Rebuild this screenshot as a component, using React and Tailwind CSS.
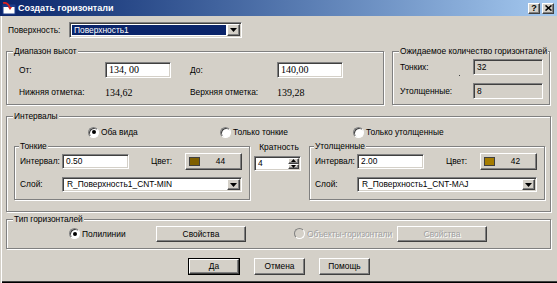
import React from "react";

const sunken =
  "border border-t-[#808080] border-l-[#808080] border-b-white border-r-white shadow-[inset_1px_1px_0_#404040,inset_-1px_-1px_0_#d4d0c8]";
const raised =
  "border border-t-white border-l-white border-b-[#404040] border-r-[#404040] shadow-[inset_-1px_-1px_0_#808080]";
const groupBox =
  "relative border border-[#808080] shadow-[inset_1px_1px_0_#fff,1px_1px_0_#fff]";

function Group({ title, className, children, legendLeft = "left-[6px]" }) {
  return (
    <div className={`${groupBox} ${className}`}>
      <span
        className={`absolute top-[-7px] ${legendLeft} px-[1px] bg-[#d4d0c8] leading-[12px] whitespace-nowrap`}
      >
        {title}
      </span>
      {children}
    </div>
  );
}

function Arrow() {
  return (
    <svg width="7" height="4" viewBox="0 0 7 4">
      <polygon points="0,0 7,0 3.5,4" fill="#000" />
    </svg>
  );
}

function Select({ value, className, selected }) {
  return (
    <div className={`${sunken} bg-white flex items-stretch p-[1px] ${className}`}>
      <div
        className={`flex-1 flex items-center pl-[2px] leading-none m-[1px] whitespace-nowrap ${
          selected ? "bg-[#0a246a] text-white" : ""
        }`}
      >
        {value}
      </div>
      <div className={`${raised} bg-[#d4d0c8] w-[13px] flex items-center justify-center`}>
        <Arrow />
      </div>
    </div>
  );
}

function Input({ value, className, serif, readOnly }) {
  return (
    <div
      className={`${sunken} ${readOnly ? "bg-[#d4d0c8]" : "bg-white"} flex items-center pl-[3px] leading-none ${
        serif ? "font-['Liberation_Serif',serif] text-[10px]" : ""
      } ${className}`}
    >
      {value}
    </div>
  );
}

function Radio({ checked }) {
  return (
    <span className="w-[11px] h-[11px] rounded-full bg-white border border-t-[#808080] border-l-[#808080] border-b-white border-r-white shadow-[inset_1px_1px_0_#404040] flex items-center justify-center shrink-0">
      {checked && <span className="w-[4px] h-[4px] rounded-full bg-black" />}
    </span>
  );
}

function Button({ children, className, disabled, isDefault }) {
  const btn = (
    <div
      className={`${raised} bg-[#d4d0c8] flex items-center justify-center leading-none whitespace-nowrap ${
        disabled ? "text-[#a0a0a0]" : ""
      } ${isDefault ? "w-full h-full" : className}`}
    >
      {children}
    </div>
  );
  if (isDefault) {
    return <div className={`border border-black ${className}`}>{btn}</div>;
  }
  return btn;
}

function ColorButton({ color, value }) {
  return (
    <div className={`${raised} bg-[#d4d0c8] w-[57px] h-[17px] flex items-center pl-[3px]`}>
      <span className="w-[11px] h-[9px] border border-[#404040]" style={{ backgroundColor: color }} />
      <span className="flex-1 text-center leading-none">{value}</span>
    </div>
  );
}

function SubGroup({ title, interval, color, colorValue, layer }) {
  return (
    <Group title={title} legendLeft="left-[4px]" className="w-[236px] h-[54px] pl-[5px] pt-[6px] shrink-0">
      <div className="flex items-center h-[17px]">
        <span className="w-[42px]">Интервал:</span>
        <Input value={interval} className="w-[67px] h-[15px]" />
        <span className="ml-[22px] w-[34px]">Цвет:</span>
        <ColorButton color={color} value={colorValue} />
      </div>
      <div className="flex items-center mt-[7px] h-[15px]">
        <span className="w-[42px]">Слой:</span>
        <Select value={layer} className="w-[180px] h-[15px]" />
      </div>
    </Group>
  );
}

export default function App() {
  return (
    <div className="w-[557px] h-[283px] bg-[#d4d0c8] flex flex-col overflow-hidden text-[8.4px] text-black font-['Liberation_Sans',Arial,sans-serif]">
      {/* Title bar */}
      <div className="h-[16px] shrink-0 flex items-center bg-gradient-to-r from-[#0a246a] to-[#a6caf0] pl-[2px] pr-[3px]">
        <svg width="14" height="13" viewBox="0 0 14 13" className="shrink-0">
          <rect x="1" y="3" width="12" height="9" fill="#fff" stroke="#1c3c8c" />
          <rect x="1" y="3" width="12" height="2" fill="#1c3c8c" />
          <path d="M1 1 Q6 0 8 6" stroke="#e02020" strokeWidth="1.6" fill="none" />
          <polygon points="6,5 10,5 8,8" fill="#e02020" />
        </svg>
        <span className="ml-[2px] text-white font-bold text-[9px] leading-none">Создать горизонтали</span>
        <div className="ml-auto flex gap-[2px]">
          <div className={`${raised} bg-[#d4d0c8] w-[12px] h-[11px] flex items-center justify-center font-bold text-[9px] leading-none`}>
            ?
          </div>
          <div className={`${raised} bg-[#d4d0c8] w-[12px] h-[11px] flex items-center justify-center`}>
            <svg width="7" height="6" viewBox="0 0 7 6">
              <path d="M0.5 0.5 L6.5 5.5 M6.5 0.5 L0.5 5.5" stroke="#000" strokeWidth="1.6" />
            </svg>
          </div>
        </div>
      </div>

      {/* Body */}
      <div className="flex-1 pl-[6px] shadow-[inset_1px_0_0_#d4d0c8,inset_2px_0_0_#fff,inset_0_-1px_0_#000,inset_0_-2px_0_#404040]">
        {/* Surface row */}
        <div className="mt-[6px] h-[16px] flex items-center">
          <span className="w-[63px] pl-[2px]">Поверхность:</span>
          <Select value="Поверхность1" selected className="w-[173px] h-[16px]" />
        </div>

        {/* Top groups */}
        <div className="mt-[13px] flex gap-[8px]">
          <Group title="Диапазон высот" className="w-[378px] h-[54px] pl-[12px] pt-[10px]">
            <div className="flex items-center h-[16px]">
              <span className="w-[86px]">От:</span>
              <div className="w-[85px]">
                <Input value="134, 00" serif className="w-[66px] h-[16px]" />
              </div>
              <span className="w-[87px]">До:</span>
              <Input value="140,00" serif className="w-[66px] h-[16px]" />
            </div>
            <div className="flex items-center h-[12px] mt-[8px]">
              <span className="w-[86px]">Нижняя отметка:</span>
              <span className="w-[85px] font-['Liberation_Serif',serif] text-[10px]">134,62</span>
              <span className="w-[87px]">Верхняя отметка:</span>
              <span className="font-['Liberation_Serif',serif] text-[10px]">139,28</span>
            </div>
          </Group>
          <Group title="Ожидаемое количество горизонталей" className="w-[158px] h-[54px] pl-[7px] pt-[7px]">
            <div className="flex items-center h-[16px]">
              <span className="w-[73px]">Тонких:</span>
              <Input value="32" readOnly className="w-[70px] h-[16px]" />
            </div>
            <div className="flex items-center h-[16px] mt-[8px]">
              <span className="w-[73px]">Утолщенные:</span>
              <Input value="8" readOnly className="w-[70px] h-[16px]" />
            </div>
            <span className="absolute left-[66px] top-[23px] w-[1px] h-[1px] bg-[#404040]" />
          </Group>
        </div>

        {/* Intervals */}
        <Group title="Интервалы" className="mt-[11px] w-[545px] h-[96px] pt-[9px]">
          <div className="flex items-center h-[12px] pl-[81px]">
            <div className="w-[132px] flex items-center gap-[2px]">
              <Radio checked />
              <span>Оба вида</span>
            </div>
            <div className="w-[133px] flex items-center gap-[2px]">
              <Radio />
              <span>Только тонкие</span>
            </div>
            <div className="flex items-center gap-[2px]">
              <Radio />
              <span>Только утолщенные</span>
            </div>
          </div>
          <div className="flex mt-[8px] pl-[7px]">
            <SubGroup
              title="Тонкие"
              interval="0.50"
              color="#7f5f00"
              colorValue="44"
              layer="R_Поверхность1_CNT-MIN"
            />
            <div className="ml-[4px] w-[47px] flex flex-col -mt-[5px]">
              <span className="h-[12px] leading-[12px] text-center pl-[3px]">Кратность</span>
              <div className={`${sunken} bg-white mt-[3px] h-[15px] flex items-stretch p-[1px]`}>
                <span className="flex-1 flex items-center pl-[2px] leading-none">4</span>
                <div className="w-[11px] flex flex-col">
                  <div className={`${raised} bg-[#d4d0c8] flex-1 flex items-center justify-center`}>
                    <svg width="5" height="3" viewBox="0 0 5 3">
                      <polygon points="0,3 5,3 2.5,0" fill="#000" />
                    </svg>
                  </div>
                  <div className={`${raised} bg-[#d4d0c8] flex-1 flex items-center justify-center`}>
                    <svg width="5" height="3" viewBox="0 0 5 3">
                      <polygon points="0,0 5,0 2.5,3" fill="#000" />
                    </svg>
                  </div>
                </div>
              </div>
            </div>
            <div className="ml-[8px]">
              <SubGroup
                title="Утолщенные"
                interval="2.00"
                color="#a57c00"
                colorValue="42"
                layer="R_Поверхность1_CNT-MAJ"
              />
            </div>
          </div>
        </Group>

        {/* Type */}
        <Group title="Тип горизонталей" className="mt-[7px] w-[545px] h-[30px] pt-[6px]">
          <div className="flex items-center h-[16px] pl-[62px]">
            <div className="w-[87px] flex items-center gap-[2px]">
              <Radio checked />
              <span>Полилинии</span>
            </div>
            <Button className="w-[90px] h-[16px]">Свойства</Button>
            <div className="ml-[48px] w-[103px] flex items-center gap-[2px] text-[#a0a0a0] whitespace-nowrap">
              <span className="w-[11px] h-[11px] rounded-full bg-[#d4d0c8] border border-t-[#808080] border-l-[#808080] border-b-white border-r-white shrink-0" />
              <span className="[text-shadow:1px_1px_0_#fff]">Объекты-горизонтали</span>
            </div>
            <Button disabled className="w-[90px] h-[16px]">
              <span className="[text-shadow:1px_1px_0_#fff]">Свойства</span>
            </Button>
          </div>
        </Group>

        {/* Buttons */}
        <div className="mt-[9px] flex gap-[14px] pl-[182px]">
          <Button isDefault className="w-[52px] h-[17px]">Да</Button>
          <Button className="w-[51px] h-[17px]">Отмена</Button>
          <Button className="w-[51px] h-[17px]">Помощь</Button>
        </div>
      </div>
    </div>
  );
}
